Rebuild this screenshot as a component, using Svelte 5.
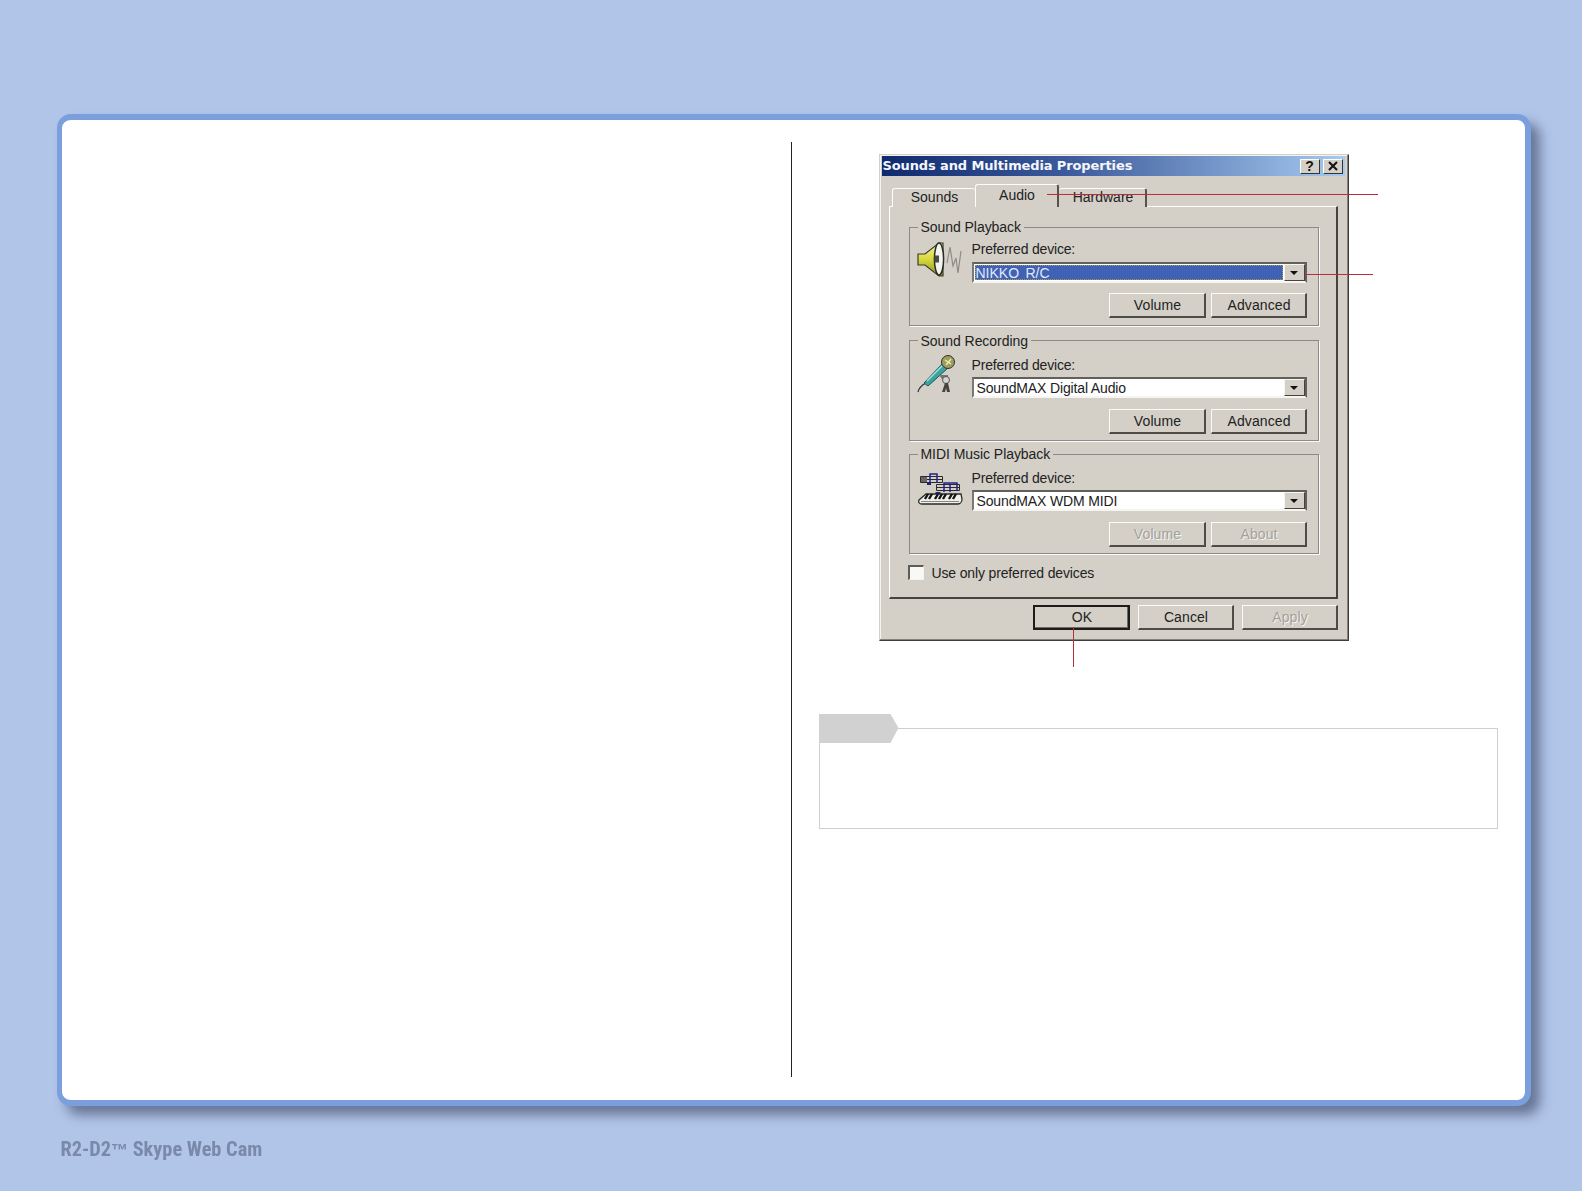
<script>
  const groups = [
    { cls: 'g1', title: 'Sound Playback', device: 'NIKKO R/C', selected: true, icon: 'speaker', b2: 'Advanced', off: false },
    { cls: 'g2', title: 'Sound Recording', device: 'SoundMAX Digital Audio', selected: false, icon: 'mic', b2: 'Advanced', off: false },
    { cls: 'g3', title: 'MIDI Music Playback', device: 'SoundMAX WDM MIDI', selected: false, icon: 'midi', b2: 'About', off: true }
  ];
</script>

<div class="page">
  <main class="card">
    <div class="left"></div>
    <div class="divider"></div>
    <div class="right">
      <div class="dialog-wrap">
        <div class="dialog">
          <div class="titlebar">
            <span class="title">Sounds and Multimedia Properties</span>
            <span class="tbtn help">?</span>
            <span class="tbtn close">
              <svg width="12" height="10" viewBox="0 0 12 10"><path d="M2 1l8 8M10 1l-8 8" stroke="#111" stroke-width="2" fill="none"/></svg>
            </span>
          </div>
          <div class="tabs">
            <div class="tab t1">Sounds</div>
            <div class="tab t2">Audio</div>
            <div class="tab t3">Hardware</div>
          </div>
          <div class="panel">
            {#each groups as g}
              <section class="group {g.cls}">
                <span class="legend">{g.title}</span>
                <div class="icon {g.icon}">
                  {#if g.icon === 'speaker'}
                    <svg width="46" height="36" viewBox="0 0 46 36">
                      <defs>
                        <linearGradient id="cone" x1="0" y1="0" x2="0" y2="1">
                          <stop offset="0" stop-color="#f4f2a0"/>
                          <stop offset=".5" stop-color="#d8d83c"/>
                          <stop offset="1" stop-color="#8c9428"/>
                        </linearGradient>
                      </defs>
                      <path d="M1 12h7L22 1h4v33h-4L8 23H1z" fill="url(#cone)" stroke="#3c3c28" stroke-width="1.2"/>
                      <ellipse cx="22" cy="17" rx="4.6" ry="16" fill="#f4f4ee" stroke="#2a2a26" stroke-width="1.5"/>
                      <rect x="17.5" y="13.5" width="4.5" height="7" fill="#4a4a44"/>
                      <path d="M30 21l3-16 3 19 3-8 2 15 3-22" fill="none" stroke="#8c8c86" stroke-width="1.2"/>
                    </svg>
                  {:else if g.icon === 'mic'}
                    <svg width="46" height="42" viewBox="0 0 46 42">
                      <path d="M1 39c1-4 4-7 8-9" fill="none" stroke="#33363a" stroke-width="1.3"/>
                      <path d="M7 30l19-20 5 5-20 18z" fill="#3aa3a0" stroke="#1d5558" stroke-width="1"/>
                      <path d="M10 28l16-16" stroke="#a5e0dc" stroke-width="1.5"/>
                      <circle cx="31" cy="9" r="6.5" fill="#9c9c64" stroke="#33332a"/>
                      <path d="M28 7l6 4M34 6l-5 6" stroke="#f2f0a0" stroke-width="1.3"/>
                      <path d="M22 22h9v4h-6z" fill="#777"/>
                      <circle cx="29" cy="27" r="3.5" fill="#d4d4d0" stroke="#555"/>
                      <path d="M28 30h3l2 9h-3l-1-4-1 4h-3z" fill="#45453f"/>
                    </svg>
                  {:else}
                    <svg width="46" height="34" viewBox="0 0 46 34">
                      <g fill="none" stroke="#2a2a2a" stroke-width="1">
                        <path d="M3.5 4.500h22M3.500 7.500h22M3.500 10.500h22M19.500 12.500h23M19.500 15.500h23M19.500 18.500h23"/>
                        <path d="M3.500 4.500v6M25.500 4.500v6M19.500 12.500v6M42.500 12.500v6"/>
                      </g>
                      <rect x="4" y="5" width="6" height="5" fill="#666"/>
                      <g fill="none" stroke="#20208c" stroke-width="1.5">
                        <path d="M13 11V2h7v8M27 20v-9h6v9M34 11h6v8"/>
                      </g>
                      <path d="M18.500 21h5M10 12h4" stroke="#20208c" stroke-width="2"/>
                      <path d="M9 22h35l1 5c0 3-2 5-4 5H5c-3 0-4-2-3-4z" fill="#f0f0ea" stroke="#2a2a26" stroke-width="1.3"/>
                      <path d="M11 22l-3 5M15 22l-3 5M21 22l-3 5M25 22l-3 5M29 22l-3 5M35 22l-3 5M39 22l-3 5" stroke="#151515" stroke-width="2.400"/>
                      <path d="M4 29.500h38" stroke="#888" stroke-width="1"/>
                    </svg>
                  {/if}
                </div>
                <div class="controls">
                  <div class="label">Preferred device:</div>
                  <div class="combo">
                    <div class="value" class:selected={g.selected}><span>{g.device}</span></div>
                    <div class="arrow"><i></i></div>
                  </div>
                  <div class="btns">
                    <button class="btn w97" class:off={g.off}>Volume</button>
                    <button class="btn w96" class:off={g.off}>{g.b2}</button>
                  </div>
                </div>
              </section>
            {/each}
            <label class="check"><span class="box"></span>Use only preferred devices</label>
          </div>
          <div class="actions">
            <button class="btn w97 default">OK</button>
            <button class="btn w96">Cancel</button>
            <button class="btn w96 off">Apply</button>
          </div>
        </div>
        <span class="call c1"></span>
        <span class="call c2"></span>
        <span class="call c3"></span>
      </div>
      <div class="note"><span class="tag"></span></div>
    </div>
  </main>
  <footer class="foot">R2-D2<span class="tm">™</span> Skype Web Cam</footer>
</div>

<style>
  :global(body) { background: #b1c5e9; }
  .page { height: 1191px; box-sizing: border-box; padding: 114px 0 0 57px; overflow: hidden; font-family: "Liberation Sans", Arial, sans-serif; }
  .card { width: 1474px; height: 992px; box-sizing: border-box; background: #fff; border: 6px solid #7b9fdc; border-left-width: 5.5px; border-radius: 14px; box-shadow: 9px 9px 12px rgba(52, 62, 92, .58); display: flex; }
  .left { width: 728.5px; }
  .divider { width: 1px; height: 935px; margin-top: 22px; background: #222; }
  .right { flex: 1; }

  .dialog-wrap { position: relative; margin: 34px 0 0 87px; width: 470px; filter: blur(.45px); }
  .dialog { width: 470px; height: 487px; box-sizing: border-box; background: #d4d0c8; border: 1px solid; border-color: #d4d0c8 #3c3c38 #3c3c38 #d4d0c8; box-shadow: inset -1px -1px 0 #85827b, inset 1px 1px 0 #f4f3ef; padding: 1px 3px 0 2px; color: #222; font-size: 14px; }
  .titlebar { height: 20px; background: linear-gradient(90deg, #0f2a6e 0%, #3c5a9c 40%, #a6caf0 100%); display: flex; align-items: center; padding-left: 1px; }
  .title { font: bold 13px/18px "DejaVu Sans", sans-serif; letter-spacing: -.12px; color: #f4f6fa; flex: 1; white-space: nowrap; }
  .tbtn { width: 20px; height: 15px; box-sizing: border-box; background: #d4d0c8; border: 1px solid; border-color: #fff #333 #333 #fff; display: flex; align-items: center; justify-content: center; font: bold 14px "Liberation Sans", sans-serif; color: #111; margin-right: 3px; }
  .close { margin-right: 2px; }

  .tabs { display: flex; align-items: flex-end; height: 23px; margin: 8px 0 0 10px; position: relative; z-index: 1; }
  .tab { box-sizing: border-box; height: 19px; background: #d4d0c8; border: 1px solid; border-bottom: 0; border-color: #fdfdfb #55534e #fdfdfb #fdfdfb; border-radius: 3px 3px 0 0; display: flex; justify-content: center; line-height: 16px; padding-left: 2px; }
  .t1 { width: 83px; border-right: 0; }
  .t2 { width: 84px; height: 23px; border-right-width: 2px; padding-top: 2px; padding-left: 2px; }
  .t3 { width: 88px; border-left: 0; border-right-width: 2px; padding-left: 3px; }

  .panel { width: 449px; height: 393px; box-sizing: border-box; margin: -1px 0 0 7px; border: 1px solid; border-width: 1px 2px 2px 1px; border-color: #fdfdfb #45443f #45443f #fdfdfb; padding: 20px 0 0 19px; }
  .group { position: relative; width: 410px; box-sizing: border-box; border: 1px solid #8a8a8c; box-shadow: 1px 1px 0 #fbfbf8; padding: 0 11px 0 7px; display: flex; }
  .g1 { height: 99px; padding-top: 13px; }
  .g2 { height: 101px; margin-top: 14px; padding-top: 16px; }
  .g3 { height: 100px; margin-top: 13px; padding-top: 15px; }
  .legend { position: absolute; left: 8px; top: -9px; background: #d4d0c8; padding: 0 3px; line-height: 17px; white-space: nowrap; letter-spacing: -.05px; }
  .g2 .legend { top: -8px; }
  .icon { width: 55px; flex: none; }
  .g1 .icon { margin-top: 1px; }
  .g2 .icon { margin-top: -4px; }
  .g3 .icon { margin-top: 2px; }
  .icon svg { display: block; }
  .controls { flex: 1; display: flex; flex-direction: column; }
  .label { line-height: 16px; margin-bottom: 5px; letter-spacing: -.18px; }
  .g2 .label { margin-bottom: 4px; }
  .g3 .label { margin-bottom: 4px; }
  .combo { width: 335px; height: 21px; box-sizing: border-box; border: 2px solid; border-color: #62605c #62605c #f6f5f1 #7a7874; display: flex; background: #fff; margin-bottom: 11px; }
  .g1 .combo { margin-bottom: 10px; }
  .value { flex: 1; padding-left: 3px; padding-top: 1px; line-height: 17px; color: #222; letter-spacing: -.14px; }
  .value.selected { margin: 1px; padding-left: 1px; padding-top: 0; background: #3f62b6; color: #e2e8f8; outline: 1px dotted #a89a50; outline-offset: -1px; line-height: 16px; letter-spacing: 0; word-spacing: 2.5px; }
  .arrow { width: 21px; background: #d4d0c8; border: 1px solid; border-color: #f6f5f1 #45443f #45443f #f6f5f1; box-sizing: border-box; display: flex; align-items: center; justify-content: center; }
  .arrow i { width: 0; height: 0; border: 4.500px solid transparent; border-top: 4.500px solid #111; border-bottom: 0; }
  .btns { display: flex; justify-content: flex-end; gap: 5px; }
  .btn { height: 25px; padding: 0 0 0 2px; box-sizing: border-box; background: #d4d0c8; border: 1px solid; border-width: 1px 2px 2px 1px; border-color: #fbfaf7 #4d4c47 #4d4c47 #fbfaf7; font: 14px "Liberation Sans", sans-serif; letter-spacing: .1px; color: #222; }
  .w97 { width: 97px; }
  .w96 { width: 96px; }
  .btn.off { color: #a3a19b; text-shadow: 1px 1px 0 #f6f5f1; }
  .btn.default { border: 2px solid #1c1c1a; box-shadow: inset -1px -1px 0 #6e6c67; padding-bottom: 2px; }
  .check { display: flex; align-items: center; gap: 8px; height: 15px; margin: 11px 0 0 -1px; letter-spacing: -.15px; }
  .box { width: 16px; height: 15px; box-sizing: border-box; background: #f8f8f5; border: 1px solid; border-width: 2px 1px 1px 2px; border-color: #5e5c58 #f4f3ef #f4f3ef #5e5c58; }
  .actions { display: flex; justify-content: flex-end; gap: 8px; margin: 6px 3px 0 0; width: 456px; }

  .call { position: absolute; background: #b5303a; z-index: 2; }
  .c1 { left: 168px; top: 40px; width: 331px; height: 1px; }
  .c2 { left: 426px; top: 120px; width: 68px; height: 1px; }
  .c3 { left: 194px; top: 473px; width: 1px; height: 40px; }

  .note { position: relative; width: 679px; height: 101px; box-sizing: border-box; margin: 87px 0 0 27px; border: 1px solid #cfcfcf; }
  .tag { position: absolute; left: -1px; top: -15px; width: 80px; height: 29px; background: #d1d1d1; clip-path: polygon(0 0, 72px 0, 80px 14px, 72px 29px, 0 29px); }

  .foot { margin: 31px 0 0 3.500px; font: bold 20.300px/24px "Liberation Sans Narrow", "Roboto Condensed", "Liberation Sans", sans-serif; color: #7a89aa; filter: blur(.4px); }
  .tm { font-family: "Liberation Sans", sans-serif; font-size: 17px; }
</style>
